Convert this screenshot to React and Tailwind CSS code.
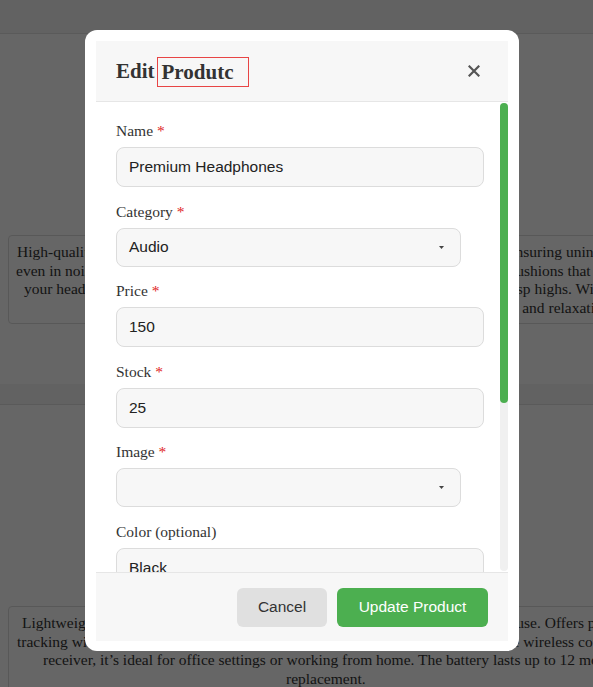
import React from 'react';

const serif = "font-['Liberation_Serif','Times_New_Roman',serif]";
const sans = "font-['Liberation_Sans',Arial,sans-serif]";

// 뒤쪽 상품 카드 설명 (모달에 가려진 부분) - 줄마다 시작 위치
const topLines = [
  ['pl-[8px]', 'High-quality over-ear headphones with active noise cancellation and rich bass, ensuring uninterrupted listening'],
  ['pl-[7px]', 'even in noisy environments. Equipped with ultra-soft plushy memory foam ear cushions that adapt to'],
  ['pl-[15px]', 'your head for all-day comfort, delivering a rich and powerful, deep bass and crisp highs. With a'],
  ['pl-[252px]', 'long-lasting battery life, perfect for travel and relaxation.'],
];

const bottomLines = [
  ['pl-[13px]', 'Lightweight ergonomic wireless mouse designed for really comfortable all-day use. Offers precise'],
  ['pl-[8px]', 'tracking with an adjustable DPI and silent clicks. Thanks to the solid and reliable wireless connection via USB'],
  ['pl-[34px]', 'receiver, it\u2019s ideal for office settings or working from home. The battery lasts up to 12 months'],
  ['pl-[277px]', 'replacement.'],
];

const ProductCard = ({ lines }) => (
  <div className="h-[351px] bg-white border-t border-[#e2e2e2] flex flex-col">
    <div className="h-[201px]" />
    <div
      className={`ml-2 w-[640px] h-[89px] border border-[#dcdcdc] rounded-[4px] pt-[7px] text-[15.5px] leading-[18.5px] text-[#333] whitespace-nowrap overflow-hidden ${serif}`}
    >
      {lines.map(([pad, l], i) => (
        <div key={i} className={pad}>{l}</div>
      ))}
    </div>
  </div>
);

const Label = ({ text, required }) => (
  <label className={`block text-[15.5px] leading-[18px] mb-[7px] text-[#333] ${serif}`}>
    {text}
    {required && <span className="text-[#e02424]"> *</span>}
  </label>
);

const Field = ({ label, required, value }) => (
  <div className="mb-[15.5px]">
    <Label text={label} required={required} />
    <div
      className={`w-[368px] h-[40px] flex items-center px-3 bg-[#f7f7f7] border border-[#dcdcdc] rounded-lg text-[15.5px] text-[#222] ${sans}`}
    >
      {value}
    </div>
  </div>
);

const SelectField = ({ label, required, value }) => (
  <div className="mb-[15.5px]">
    <Label text={label} required={required} />
    <div
      className={`w-[345px] h-[39px] flex items-center justify-between pl-3 pr-[16px] bg-[#f7f7f7] border border-[#dcdcdc] rounded-lg text-[15.5px] text-[#222] ${sans}`}
    >
      <span>{value}</span>
      <svg width="5" height="3" viewBox="0 0 5 3">
        <polygon points="0,0 5,0 2.5,3" fill="#444" />
      </svg>
    </div>
  </div>
);

export default function App() {
  return (
    <div className="relative h-[687px] w-full overflow-hidden bg-[#f6f6f6]">
      {/* 뒤쪽 페이지 */}
      <div className="h-[33px]" />
      <ProductCard lines={topLines} />
      <div className="h-[20px]" />
      <ProductCard lines={bottomLines} />

      {/* 모달 오버레이 */}
      <div className="fixed inset-0 bg-black/60 flex items-start pt-[30px] pl-[85px]">
        <div className="w-[434px] h-[621px] bg-white rounded-[12px] p-[11px] flex flex-col">
          {/* 헤더 */}
          <div className="h-[61px] shrink-0 flex items-center justify-between pl-[20px] pr-[28px] bg-[#f7f7f7] border-b border-[#e6e6e6]">
            <h2 className={`text-[21px] font-bold text-[#333] flex items-center pt-[1px] ${serif}`}>
              Edit
              <span className="ml-[2px] inline-block w-[92px] h-[30px] leading-[28px] pl-[4px] border border-[#e84545]">
                Produtc
              </span>
            </h2>
            <svg width="12" height="12" viewBox="0 0 12 12">
              <path d="M1.5 1.5 L10.5 10.5 M10.5 1.5 L1.5 10.5" stroke="#555" strokeWidth="2.2" strokeLinecap="square" />
            </svg>
          </div>

          {/* 바디 + 스크롤바 */}
          <div className="h-[470px] shrink-0 flex">
            <div className="flex-1 overflow-hidden pt-[20px] pl-[20px]">
              <Field label="Name" required value="Premium Headphones" />
              <SelectField label="Category" required value="Audio" />
              <Field label="Price" required value="150" />
              <Field label="Stock" required value="25" />
              <SelectField label="Image" required value="" />
              <Field label="Color (optional)" value="Black" />
            </div>
            <div className="w-2 h-[468px] mt-[1px] bg-[#f0f0f0] rounded-full">
              <div className="h-[300px] bg-[#4caf50] rounded-full" />
            </div>
          </div>

          {/* 푸터 */}
          <div className={`h-[69px] shrink-0 flex items-center justify-end gap-[10px] pr-[20px] bg-[#f7f7f7] border-t border-[#e6e6e6] text-[15.5px] ${sans}`}>
            <button className="w-[90px] h-[39px] rounded-[6px] bg-[#e0e0e0] text-[#333]">
              Cancel
            </button>
            <button className="w-[151px] h-[39px] rounded-[6px] bg-[#4caf50] text-white">
              Update Product
            </button>
          </div>
        </div>
      </div>
    </div>
  );
}
